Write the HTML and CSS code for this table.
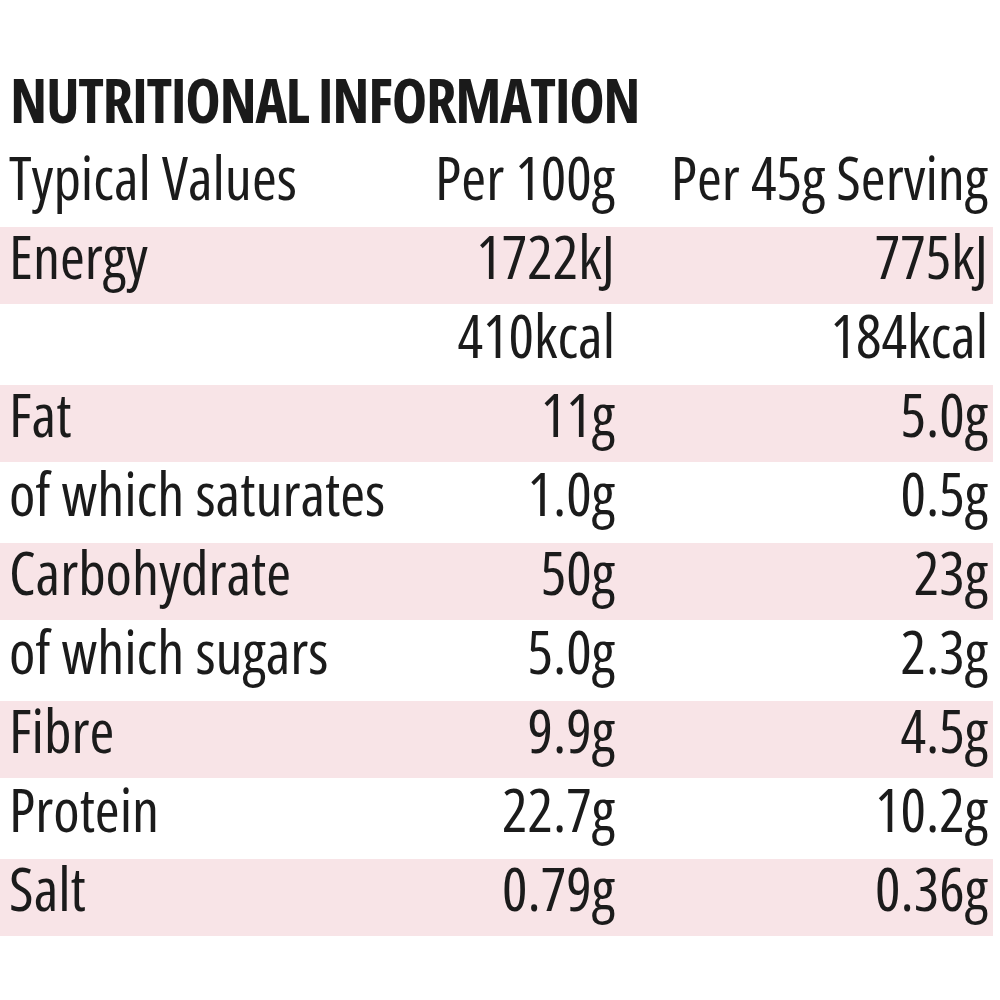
FILE: index.html
```html
<!DOCTYPE html>
<html lang="en">
<head>
<meta charset="utf-8">
<title>Nutritional Information</title>
<link rel="stylesheet" href="styles.css">
</head>
<body>
<main class="panel">
  <h1 class="title">NUTRITIONAL INFORMATION</h1>
  <div class="table">
    <div class="row">
      <div class="cell name">Typical Values</div>
      <div class="cell val">Per 100g</div>
      <div class="cell val">Per 45g Serving</div>
    </div>
    <div class="row band">
      <div class="cell name">Energy</div>
      <div class="cell val">1722kJ</div>
      <div class="cell val">775kJ</div>
    </div>
    <div class="row">
      <div class="cell name"></div>
      <div class="cell val">410kcal</div>
      <div class="cell val">184kcal</div>
    </div>
    <div class="row band">
      <div class="cell name">Fat</div>
      <div class="cell val">11g</div>
      <div class="cell val">5.0g</div>
    </div>
    <div class="row">
      <div class="cell name">of which saturates</div>
      <div class="cell val">1.0g</div>
      <div class="cell val">0.5g</div>
    </div>
    <div class="row band">
      <div class="cell name">Carbohydrate</div>
      <div class="cell val">50g</div>
      <div class="cell val">23g</div>
    </div>
    <div class="row">
      <div class="cell name">of which sugars</div>
      <div class="cell val">5.0g</div>
      <div class="cell val">2.3g</div>
    </div>
    <div class="row band">
      <div class="cell name">Fibre</div>
      <div class="cell val">9.9g</div>
      <div class="cell val">4.5g</div>
    </div>
    <div class="row">
      <div class="cell name">Protein</div>
      <div class="cell val">22.7g</div>
      <div class="cell val">10.2g</div>
    </div>
    <div class="row band">
      <div class="cell name">Salt</div>
      <div class="cell val">0.79g</div>
      <div class="cell val">0.36g</div>
    </div>
  </div>
</main>
</body>
</html>
```
FILE: styles.css
```css
html, body {
  margin: 0;
  padding: 0;
  background: #ffffff;
}

.panel {
  width: 993px;
  font-family: "Open Sans", "Liberation Sans", sans-serif;
  font-stretch: 75%;
  color: #1b1b1b;
}

.title {
  margin: 0 0 18px 0;
  padding: 70px 0 0 10px;
  font-size: 60px;
  line-height: 60px;
  font-weight: 700;
  font-stretch: 75%;
  letter-spacing: -1.4px;
  color: #1a1a1a;
  white-space: nowrap;
}

.table {
  display: flex;
  flex-direction: column;
  gap: 2px;
}

.row {
  display: grid;
  grid-template-columns: 1fr 215px 373px;
  height: 77px;
  padding: 0 5px 0 9px;
  font-size: 60px;
  line-height: 59px;
  font-weight: 385;
}

.band {
  background: #f8e4e7;
}

.cell {
  white-space: nowrap;
}

.val {
  text-align: right;
}
```
